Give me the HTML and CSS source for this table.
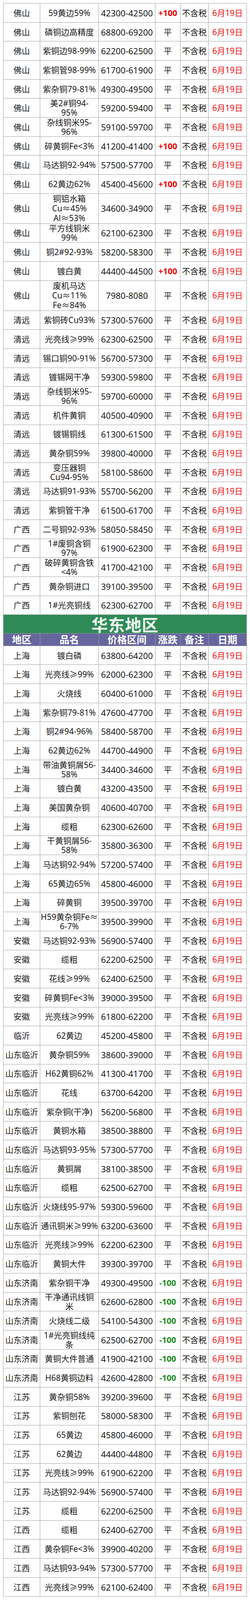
FILE: index.html
```html
<!DOCTYPE html>
<html lang="zh-CN">
<head>
<meta charset="utf-8">
<title>铜价格表</title>
<link rel="stylesheet" href="styles.css">
</head>
<body>
<div class="grid">
<div class="row"><div>佛山</div><div>59黄边59%</div><div>42300-42500</div><div class="up">+100</div><div>不含税</div><div class="date">6月19日</div></div>
<div class="row"><div>佛山</div><div>磷铜边高精度</div><div>68800-69200</div><div>平</div><div>不含税</div><div class="date">6月19日</div></div>
<div class="row"><div>佛山</div><div>紫铜边98-99%</div><div>62200-62500</div><div>平</div><div>不含税</div><div class="date">6月19日</div></div>
<div class="row"><div>佛山</div><div>紫铜管98-99%</div><div>61700-61900</div><div>平</div><div>不含税</div><div class="date">6月19日</div></div>
<div class="row"><div>佛山</div><div>紫杂铜79-81%</div><div>49300-49500</div><div>平</div><div>不含税</div><div class="date">6月19日</div></div>
<div class="row"><div>佛山</div><div>美2#铜94-<br>95%</div><div>59200-59400</div><div>平</div><div>不含税</div><div class="date">6月19日</div></div>
<div class="row"><div>佛山</div><div>杂线铜米95-<br>96%</div><div>59100-59700</div><div>平</div><div>不含税</div><div class="date">6月19日</div></div>
<div class="row"><div>佛山</div><div>碎黄铜Fe&lt;3%</div><div>41200-41400</div><div class="up">+100</div><div>不含税</div><div class="date">6月19日</div></div>
<div class="row"><div>佛山</div><div>马达铜92-94%</div><div>57500-57700</div><div>平</div><div>不含税</div><div class="date">6月19日</div></div>
<div class="row"><div>佛山</div><div>62黄边62%</div><div>45400-45600</div><div class="up">+100</div><div>不含税</div><div class="date">6月19日</div></div>
<div class="row tall"><div>佛山</div><div>铜铝水箱<br>Cu≈45%<br>Al≈53%</div><div>34600-34900</div><div>平</div><div>不含税</div><div class="date">6月19日</div></div>
<div class="row"><div>佛山</div><div>平方线铜米<br>99%</div><div>62100-62300</div><div>平</div><div>不含税</div><div class="date">6月19日</div></div>
<div class="row"><div>佛山</div><div>铜2#92-93%</div><div>58200-58300</div><div>平</div><div>不含税</div><div class="date">6月19日</div></div>
<div class="row"><div>佛山</div><div>镀白黄</div><div>44400-44500</div><div class="up">+100</div><div>不含税</div><div class="date">6月19日</div></div>
<div class="row tall"><div>佛山</div><div>废机马达<br>Cu≈11%<br>Fe≈84%</div><div>7980-8080</div><div>平</div><div>不含税</div><div class="date">6月19日</div></div>
<div class="row"><div>清远</div><div>紫铜砖Cu93%</div><div>57300-57600</div><div>平</div><div>不含税</div><div class="date">6月19日</div></div>
<div class="row"><div>清远</div><div>光亮线≥99%</div><div>62300-62500</div><div>平</div><div>不含税</div><div class="date">6月19日</div></div>
<div class="row"><div>清远</div><div>锡口铜90-91%</div><div>56700-57300</div><div>平</div><div>不含税</div><div class="date">6月19日</div></div>
<div class="row"><div>清远</div><div>镀锡网干净</div><div>59300-59800</div><div>平</div><div>不含税</div><div class="date">6月19日</div></div>
<div class="row"><div>清远</div><div>杂线铜米95-<br>96%</div><div>59700-60000</div><div>平</div><div>不含税</div><div class="date">6月19日</div></div>
<div class="row"><div>清远</div><div>机件黄铜</div><div>40500-40900</div><div>平</div><div>不含税</div><div class="date">6月19日</div></div>
<div class="row"><div>清远</div><div>镀锡铜线</div><div>61300-61500</div><div>平</div><div>不含税</div><div class="date">6月19日</div></div>
<div class="row"><div>清远</div><div>黄杂铜59%</div><div>39800-40000</div><div>平</div><div>不含税</div><div class="date">6月19日</div></div>
<div class="row"><div>清远</div><div>变压器铜<br>Cu94-95%</div><div>58100-58600</div><div>平</div><div>不含税</div><div class="date">6月19日</div></div>
<div class="row"><div>清远</div><div>马达铜91-93%</div><div>55700-56200</div><div>平</div><div>不含税</div><div class="date">6月19日</div></div>
<div class="row"><div>清远</div><div>紫铜管干净</div><div>61500-61700</div><div>平</div><div>不含税</div><div class="date">6月19日</div></div>
<div class="row"><div>广西</div><div>二号铜92-93%</div><div>58050-58450</div><div>平</div><div>不含税</div><div class="date">6月19日</div></div>
<div class="row"><div>广西</div><div>1#废铜含铜<br>97%</div><div>61900-62300</div><div>平</div><div>不含税</div><div class="date">6月19日</div></div>
<div class="row"><div>广西</div><div>破碎黄铜含铁<br>&lt;4%</div><div>41700-42100</div><div>平</div><div>不含税</div><div class="date">6月19日</div></div>
<div class="row"><div>广西</div><div>黄杂铜进口</div><div>39100-39500</div><div>平</div><div>不含税</div><div class="date">6月19日</div></div>
<div class="row"><div>广西</div><div>1#光亮铜线</div><div>62300-62700</div><div>平</div><div>不含税</div><div class="date">6月19日</div></div>
<div class="region">华东地区</div>
<div class="row head"><div>地区</div><div>品名</div><div>价格区间</div><div>涨跌</div><div>备注</div><div>日期</div></div>
<div class="row"><div>上海</div><div>镀白磷</div><div>63800-64200</div><div>平</div><div>不含税</div><div class="date">6月19日</div></div>
<div class="row"><div>上海</div><div>光亮线≥99%</div><div>62000-62300</div><div>平</div><div>不含税</div><div class="date">6月19日</div></div>
<div class="row"><div>上海</div><div>火烧线</div><div>60400-61000</div><div>平</div><div>不含税</div><div class="date">6月19日</div></div>
<div class="row"><div>上海</div><div>紫杂铜79-81%</div><div>47600-47700</div><div>平</div><div>不含税</div><div class="date">6月19日</div></div>
<div class="row"><div>上海</div><div>铜2#94-96%</div><div>58400-58700</div><div>平</div><div>不含税</div><div class="date">6月19日</div></div>
<div class="row"><div>上海</div><div>62黄边62%</div><div>44700-44900</div><div>平</div><div>不含税</div><div class="date">6月19日</div></div>
<div class="row"><div>上海</div><div>带油黄铜屑56-<br>58%</div><div>34400-34600</div><div>平</div><div>不含税</div><div class="date">6月19日</div></div>
<div class="row"><div>上海</div><div>镀白黄</div><div>43200-43500</div><div>平</div><div>不含税</div><div class="date">6月19日</div></div>
<div class="row"><div>上海</div><div>美国黄杂铜</div><div>40600-40700</div><div>平</div><div>不含税</div><div class="date">6月19日</div></div>
<div class="row"><div>上海</div><div>缆粗</div><div>62300-62600</div><div>平</div><div>不含税</div><div class="date">6月19日</div></div>
<div class="row"><div>上海</div><div>干黄铜屑56-<br>58%</div><div>35800-36300</div><div>平</div><div>不含税</div><div class="date">6月19日</div></div>
<div class="row"><div>上海</div><div>马达铜92-94%</div><div>57200-57400</div><div>平</div><div>不含税</div><div class="date">6月19日</div></div>
<div class="row"><div>上海</div><div>65黄边65%</div><div>45800-46000</div><div>平</div><div>不含税</div><div class="date">6月19日</div></div>
<div class="row"><div>上海</div><div>碎黄铜</div><div>39500-39700</div><div>平</div><div>不含税</div><div class="date">6月19日</div></div>
<div class="row"><div>上海</div><div>H59黄杂铜Fe≈<br>6-7%</div><div>39500-39900</div><div>平</div><div>不含税</div><div class="date">6月19日</div></div>
<div class="row"><div>安徽</div><div>马达铜92-93%</div><div>56900-57400</div><div>平</div><div>不含税</div><div class="date">6月19日</div></div>
<div class="row"><div>安徽</div><div>缆粗</div><div>62200-62500</div><div>平</div><div>不含税</div><div class="date">6月19日</div></div>
<div class="row"><div>安徽</div><div>花线≥99%</div><div>62400-62500</div><div>平</div><div>不含税</div><div class="date">6月19日</div></div>
<div class="row"><div>安徽</div><div>碎黄铜Fe&lt;3%</div><div>39000-39500</div><div>平</div><div>不含税</div><div class="date">6月19日</div></div>
<div class="row"><div>安徽</div><div>光亮线≥99%</div><div>61800-62200</div><div>平</div><div>不含税</div><div class="date">6月19日</div></div>
<div class="row"><div>临沂</div><div>62黄边</div><div>45200-45800</div><div>平</div><div>不含税</div><div class="date">6月19日</div></div>
<div class="row"><div>山东临沂</div><div>黄杂铜59%</div><div>38600-39000</div><div>平</div><div>不含税</div><div class="date">6月19日</div></div>
<div class="row"><div>山东临沂</div><div>H62黄铜62%</div><div>41300-41700</div><div>平</div><div>不含税</div><div class="date">6月19日</div></div>
<div class="row"><div>山东临沂</div><div>花线</div><div>63700-64200</div><div>平</div><div>不含税</div><div class="date">6月19日</div></div>
<div class="row"><div>山东临沂</div><div>紫杂铜(干净)</div><div>56200-56800</div><div>平</div><div>不含税</div><div class="date">6月19日</div></div>
<div class="row"><div>山东临沂</div><div>黄铜水箱</div><div>38500-38800</div><div>平</div><div>不含税</div><div class="date">6月19日</div></div>
<div class="row"><div>山东临沂</div><div>马达铜93-95%</div><div>57300-57700</div><div>平</div><div>不含税</div><div class="date">6月19日</div></div>
<div class="row"><div>山东临沂</div><div>黄铜屑</div><div>38100-38500</div><div>平</div><div>不含税</div><div class="date">6月19日</div></div>
<div class="row"><div>山东临沂</div><div>缆粗</div><div>62500-62700</div><div>平</div><div>不含税</div><div class="date">6月19日</div></div>
<div class="row"><div>山东临沂</div><div>火烧线95-97%</div><div>59300-59600</div><div>平</div><div>不含税</div><div class="date">6月19日</div></div>
<div class="row"><div>山东临沂</div><div>通讯铜米≥99%</div><div>63200-63600</div><div>平</div><div>不含税</div><div class="date">6月19日</div></div>
<div class="row"><div>山东临沂</div><div>光亮线≥99%</div><div>62200-62300</div><div>平</div><div>不含税</div><div class="date">6月19日</div></div>
<div class="row"><div>山东临沂</div><div>黄铜大件</div><div>39300-39700</div><div>平</div><div>不含税</div><div class="date">6月19日</div></div>
<div class="row"><div>山东济南</div><div>紫杂铜干净</div><div>49300-49500</div><div class="down">-100</div><div>不含税</div><div class="date">6月19日</div></div>
<div class="row"><div>山东济南</div><div>干净通讯线铜<br>米</div><div>62600-62800</div><div class="down">-100</div><div>不含税</div><div class="date">6月19日</div></div>
<div class="row"><div>山东济南</div><div>火烧线二级</div><div>54100-54300</div><div class="down">-100</div><div>不含税</div><div class="date">6月19日</div></div>
<div class="row"><div>山东济南</div><div>1#光亮铜线纯<br>条</div><div>62500-62700</div><div class="down">-100</div><div>不含税</div><div class="date">6月19日</div></div>
<div class="row"><div>山东济南</div><div>黄铜大件普通</div><div>41900-42100</div><div class="down">-100</div><div>不含税</div><div class="date">6月19日</div></div>
<div class="row"><div>山东济南</div><div>H68黄铜边料</div><div>42600-42800</div><div class="down">-100</div><div>不含税</div><div class="date">6月19日</div></div>
<div class="row"><div>江苏</div><div>黄杂铜58%</div><div>39200-39600</div><div>平</div><div>不含税</div><div class="date">6月19日</div></div>
<div class="row"><div>江苏</div><div>紫铜刨花</div><div>58000-58300</div><div>平</div><div>不含税</div><div class="date">6月19日</div></div>
<div class="row"><div>江苏</div><div>65黄边</div><div>45800-46000</div><div>平</div><div>不含税</div><div class="date">6月19日</div></div>
<div class="row"><div>江苏</div><div>62黄边</div><div>44400-44800</div><div>平</div><div>不含税</div><div class="date">6月19日</div></div>
<div class="row"><div>江苏</div><div>光亮线≥99%</div><div>61900-62200</div><div>平</div><div>不含税</div><div class="date">6月19日</div></div>
<div class="row"><div>江苏</div><div>马达铜92-94%</div><div>56900-57400</div><div>平</div><div>不含税</div><div class="date">6月19日</div></div>
<div class="row"><div>江苏</div><div>缆粗</div><div>62200-62500</div><div>平</div><div>不含税</div><div class="date">6月19日</div></div>
<div class="row"><div>江西</div><div>缆粗</div><div>62400-62700</div><div>平</div><div>不含税</div><div class="date">6月19日</div></div>
<div class="row"><div>江西</div><div>黄杂铜Fe&lt;3%</div><div>39900-40200</div><div>平</div><div>不含税</div><div class="date">6月19日</div></div>
<div class="row"><div>江西</div><div>马达铜93-94%</div><div>57300-57700</div><div>平</div><div>不含税</div><div class="date">6月19日</div></div>
<div class="row"><div>江西</div><div>光亮线≥99%</div><div>62100-62400</div><div>平</div><div>不含税</div><div class="date">6月19日</div></div>
</div>
</body>
</html>
```

FILE: styles.css
```css
html, body {
  margin: 0;
  padding: 0;
  background: #ffffff;
}

body {
  padding: 8px 8px 0 8px;
}

.grid {
  display: grid;
  grid-template-columns: 93px 149px 144px 63px 71px 97px;
  gap: 1px;
  width: 622px;
  background: #a0a0a0;
  border: 1px solid #a0a0a0;
  font-family: "Noto Sans", "Noto Sans CJK SC", sans-serif;
  font-size: 21px;
  color: #1a1a1a;
}

.row {
  display: contents;
}

.row > div {
  height: 47.68px;
  background: #ffffff;
  display: flex;
  align-items: center;
  justify-content: center;
  text-align: center;
  white-space: nowrap;
  line-height: 24px;
}

.row > div:nth-child(3) {
  font-size: 22px;
}

.row.tall > div {
  height: 75.9px;
  line-height: 25px;
}

.row > div.date {
  color: #ee1111;
}

.row > div.up {
  color: #ee0000;
  font-weight: 700;
}

.row > div.down {
  color: #1a8a1a;
  font-weight: 700;
}

.region {
  grid-column: 1 / -1;
  height: 46.7px;
  display: flex;
  align-items: center;
  justify-content: center;
  background: #2e8b57;
  color: #eef8f0;
  font-size: 42px;
  font-weight: 700;
  letter-spacing: 1px;
}

.row.head > div {
  height: 30.8px;
  background: #66669e;
  color: #ffffff;
  font-size: 25px;
  font-weight: 700;
  line-height: 30px;
}
```
